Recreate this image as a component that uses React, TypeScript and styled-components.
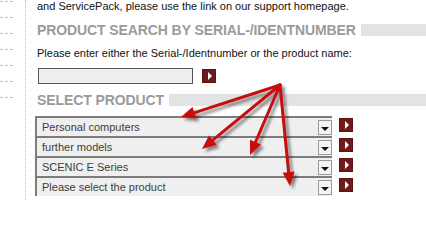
import React from "react";
import styled, { createGlobalStyle } from "styled-components";

const GlobalStyle = createGlobalStyle`
  body {
    margin: 0;
    background: #ffffff;
    font-family: "Liberation Sans", Arial, sans-serif;
  }
`;

const products = [
  "Personal computers",
  "further models",
  "SCENIC E Series",
  "Please select the product",
];

// annotation arrows: all start at one point and fan out
const origin = { x: 280, y: 85 };
const tips = [
  { x: 181, y: 117 },
  { x: 202, y: 149 },
  { x: 250, y: 155 },
  { x: 290, y: 186 },
];

const arrowParts = (tx: number, ty: number) => {
  const dx = tx - origin.x;
  const dy = ty - origin.y;
  const len = Math.sqrt(dx * dx + dy * dy);
  const ux = dx / len;
  const uy = dy / len;
  const bx = tx - ux * 14;
  const by = ty - uy * 14;
  const nx = -uy * 6;
  const ny = ux * 6;
  return {
    line: { x2: bx + ux * 2, y2: by + uy * 2 },
    head: `${tx},${ty} ${bx + nx},${by + ny} ${bx - nx},${by - ny}`,
  };
};

const App = () => {
  return (
    <>
      <GlobalStyle />
      <Page>
        <Sidebar>
          {[0, 1, 2, 3, 4, 5, 6].map((i) => (
            <Dash key={i} />
          ))}
        </Sidebar>
        <Content>
          <Intro>and ServicePack, please use the link on our support homepage.</Intro>
          <Heading>
            <HeadingText>PRODUCT SEARCH BY SERIAL-/IDENTNUMBER</HeadingText>
            <HeadingBar />
          </Heading>
          <Hint>Please enter either the Serial-/Identnumber or the product name:</Hint>
          <SearchRow>
            <SearchInput type="text" />
            <GoButton />
          </SearchRow>
          <Heading $second>
            <HeadingText>SELECT PRODUCT</HeadingText>
            <HeadingBar />
          </Heading>
          <SelectList>
            {products.map((p) => (
              <SelectRow key={p}>
                <Select>
                  <SelectText>{p}</SelectText>
                  <DropButton>
                    <DropArrow />
                  </DropButton>
                </Select>
                <GoButton $inRow />
              </SelectRow>
            ))}
          </SelectList>
        </Content>
        <Arrows width="426" height="245" viewBox="0 0 426 245">
          <defs>
            <filter id="shadow" x="-20%" y="-20%" width="140%" height="140%">
              <feDropShadow dx="3" dy="3" stdDeviation="1.6" floodColor="#000" floodOpacity="0.45" />
            </filter>
          </defs>
          <g filter="url(#shadow)">
            {tips.map((t, i) => {
              const a = arrowParts(t.x, t.y);
              return (
                <g key={i}>
                  <line
                    x1={origin.x}
                    y1={origin.y}
                    x2={a.line.x2}
                    y2={a.line.y2}
                    stroke="#c8090d"
                    strokeWidth="3"
                    strokeLinecap="round"
                  />
                  <polygon points={a.head} fill="#c8090d" />
                </g>
              );
            })}
          </g>
        </Arrows>
      </Page>
    </>
  );
};

const Page = styled.div`
  position: relative;
  display: flex;
  width: 426px;
  height: 245px;
  overflow: hidden;
  background: #ffffff;
`;

const Sidebar = styled.div`
  width: 26px;
  height: 200px;
  border-right: 1px dotted #b8b8b8;
  display: flex;
  flex-direction: column;
  gap: 15px;
  padding-top: 1px;
  box-sizing: border-box;
  flex-shrink: 0;
`;

const Dash = styled.div`
  width: 14px;
  height: 1px;
  background: repeating-linear-gradient(to right, #c4c4c4 0 3px, transparent 3px 5px);
`;

const Content = styled.div`
  flex: 1;
  padding-left: 11px;
  display: flex;
  flex-direction: column;
`;

const Intro = styled.div`
  font-size: 11px;
  line-height: 12px;
  color: #111;
`;

const Heading = styled.div<{ $second?: boolean }>`
  display: flex;
  align-items: center;
  gap: 5px;
  margin-top: ${({ $second }) => ($second ? "9px" : "11px")};
  height: 13px;
`;

const HeadingText = styled.span`
  font-size: 14px;
  font-weight: bold;
  color: #9b9b9b;
  white-space: nowrap;
  letter-spacing: -0.1px;
`;

const HeadingBar = styled.div`
  flex: 1;
  height: 12px;
  background: #e3e3e3;
`;

const Hint = styled.div`
  font-size: 11px;
  line-height: 12px;
  color: #111;
  margin-top: 11px;
`;

const SearchRow = styled.div`
  display: flex;
  align-items: center;
  gap: 9px;
  margin-top: 9px;
  padding-left: 1px;
`;

const SearchInput = styled.input`
  width: 155px;
  height: 16px;
  box-sizing: border-box;
  border: 1px solid #555;
  background: #efefef;
  padding: 0;
  outline: none;
`;

const GoButton = styled.div<{ $inRow?: boolean }>`
  width: 14px;
  height: 14px;
  box-sizing: border-box;
  background: #701b1b;
  border: 1px solid #5a1212;
  display: flex;
  align-items: center;
  justify-content: center;
  margin-top: ${({ $inRow }) => ($inRow ? "2px" : "0")};
  &::after {
    content: "";
    display: block;
    margin-left: 1px;
    border-top: 4px solid transparent;
    border-bottom: 4px solid transparent;
    border-left: 4px solid #ffffff;
  }
`;

const SelectList = styled.div`
  display: flex;
  flex-direction: column;
  margin-top: 10px;
`;

const SelectRow = styled.div`
  display: flex;
  align-items: flex-start;
  gap: 7px;
  margin-left: -2px;
`;

const Select = styled.div`
  width: 297px;
  height: 20px;
  box-sizing: border-box;
  border-top: 2px solid #7c7c7c;
  border-left: 2px solid #7c7c7c;
  background: #efefef;
  display: flex;
  align-items: center;
  justify-content: space-between;
`;

const SelectText = styled.span`
  font-size: 11px;
  color: #3c3c3c;
  padding-left: 5px;
`;

const DropButton = styled.div`
  width: 14px;
  height: 15px;
  box-sizing: border-box;
  border: 1px solid #9a9a9a;
  background: #f4f4f4;
  display: flex;
  align-items: center;
  justify-content: center;
  margin-top: 1px;
`;

const DropArrow = styled.div`
  margin-top: 2px;
  border-left: 4px solid transparent;
  border-right: 4px solid transparent;
  border-top: 4px solid #111;
`;

const Arrows = styled.svg`
  position: absolute;
  top: 0;
  left: 0;
  pointer-events: none;
`;

export default App;
